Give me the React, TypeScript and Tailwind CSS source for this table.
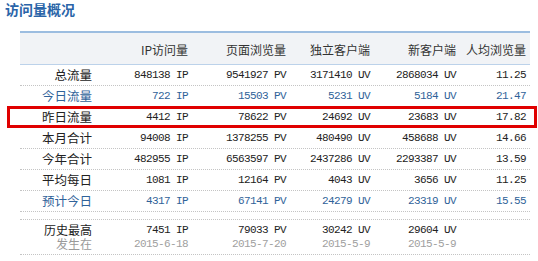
const COLS = 'grid grid-cols-[76px_96px_98px_84px_86px_70px]';
const CJK = "font-['Noto_Sans_CJK_SC',sans-serif]";
const MONO = "font-['Liberation_Mono',monospace] text-[11px] tracking-[-0.6px]";

type Row = {
    label: string;
    ip: string;
    pv: string;
    uv: string;
    nu: string;
    avg: string;
    blue?: boolean;
    mark?: boolean;
};

const ROWS: Row[] = [
    { label: '总流量', ip: '848138', pv: '9541927', uv: '3171410', nu: '2868034', avg: '11.25' },
    { label: '今日流量', ip: '722', pv: '15503', uv: '5231', nu: '5184', avg: '21.47', blue: true },
    { label: '昨日流量', ip: '4412', pv: '78622', uv: '24692', nu: '23683', avg: '17.82', mark: true },
    { label: '本月合计', ip: '94008', pv: '1378255', uv: '480490', nu: '458688', avg: '14.66' },
    { label: '今年合计', ip: '482955', pv: '6563597', uv: '2437286', nu: '2293387', avg: '13.59' },
    { label: '平均每日', ip: '1081', pv: '12164', uv: '4043', nu: '3656', avg: '11.25' },
    { label: '预计今日', ip: '4317', pv: '67141', uv: '24279', nu: '23319', avg: '15.55', blue: true },
];

const HEAD = ['', 'IP访问量', '页面浏览量', '独立客户端', '新客户端', '人均浏览量'];

const BEST = [
    ['7451 IP', '2015-6-18'],
    ['79033 PV', '2015-7-20'],
    ['30242 UV', '2015-5-9'],
    ['29604 UV', '2015-5-9'],
];

export default function App() {
    return (
        <div className="w-[538px] h-[261px] bg-white overflow-hidden">
            {/* 标题 */}
            <div className={`${CJK} pl-[5px] h-[18px] leading-[18px] text-[14px] font-bold text-[#2a64a8]`}>
                访问量概况
            </div>

            <div className="ml-[20px] mt-[13px] w-[510px]">
                {/* 表头 */}
                <div className={`${COLS} h-[34px] pt-[3px] border-t-2 border-[#9cbde0] border-b border-b-[#bcd2ea] bg-[#f1f3f6] items-center`}>
                    {HEAD.map((h, i) => (
                        <div key={i} className={`${CJK} text-right pr-[4px] text-[12px] text-[#333]`}>
                            {h}
                        </div>
                    ))}
                </div>

                {ROWS.map((r) => (
                    <div
                        key={r.label}
                        className={`${COLS} relative h-[21px] items-center border-b border-dotted border-[#c4c4c4] ${r.blue ? 'text-[#2f6299]' : 'text-[#222]'}`}
                    >
                        <div className={`${CJK} text-right pr-[4px] text-[12.5px]`}>{r.label}</div>
                        <div className={`${MONO} text-right pr-[4px]`}>{r.ip} IP</div>
                        <div className={`${MONO} text-right pr-[4px]`}>{r.pv} PV</div>
                        <div className={`${MONO} text-right pr-[4px]`}>{r.uv} UV</div>
                        <div className={`${MONO} text-right pr-[4px]`}>{r.nu} UV</div>
                        <div className={`${MONO} text-right pr-[4px]`}>{r.avg}</div>
                        {r.mark && (
                            <div className="absolute left-[-13px] right-[-7px] top-[-1px] bottom-[-1px] border-[3px] border-[#e00000]" />
                        )}
                    </div>
                ))}

                {/* 空行 */}
                <div className="h-[8px] border-b border-dotted border-[#c4c4c4]" />

                {/* 历史最高 */}
                <div className={`${COLS} h-[35px] pt-[3px] border-b border-dotted border-[#c4c4c4] leading-[14px]`}>
                    <div className={`${CJK} text-right pr-[4px] text-[12px]`}>
                        <div className="text-[#222]">历史最高</div>
                        <div className="text-[#9a9a9a]">发生在</div>
                    </div>
                    {BEST.map(([v, d]) => (
                        <div key={v} className={`${MONO} text-right pr-[4px]`}>
                            <div className="text-[#222]">{v}</div>
                            <div className="text-[#a0a0a0]">{d}</div>
                        </div>
                    ))}
                    <div />
                </div>
            </div>
        </div>
    );
}
